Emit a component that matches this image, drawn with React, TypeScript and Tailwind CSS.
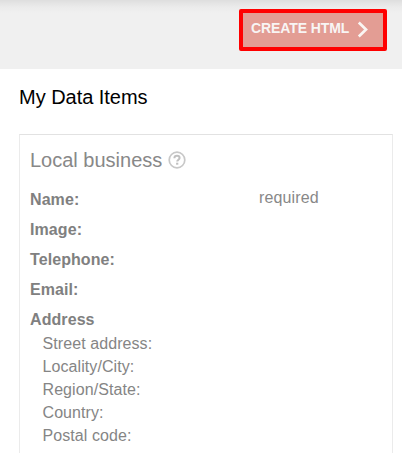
const fields = ["Name:", "Image:", "Telephone:", "Email:", "Address"];
const addressFields = ["Street address:", "Locality/City:", "Region/State:", "Country:", "Postal code:"];

function HelpIcon() {
  return (
    <svg className="mt-[15.5px] ml-[5.5px] h-[18px] w-[18px]" viewBox="0 0 18 18" fill="none">
      <circle cx="9" cy="9" r="7.8" stroke="#c8c8c8" strokeWidth="1.7" />
      <path d="M6.4 7.2C6.4 5.6 7.5 4.8 9 4.8s2.6.8 2.6 2.2c0 1.6-2.4 1.8-2.4 3.6" stroke="#c0c0c0" strokeWidth="2" />
      <path d="M9.2 11.7v2" stroke="#c0c0c0" strokeWidth="2.2" />
    </svg>
  );
}

export default function App() {
  return (
    <div className="flex h-[453px] w-[402px] flex-col overflow-hidden bg-white font-['Liberation_Sans',Arial,sans-serif]">
      <header className="flex h-[69px] shrink-0 justify-end bg-[#f0f0f0] bg-[linear-gradient(#dedede_0px,#e2e2e2_2px,#ebebeb_7px,#f0f0f0_13px)] pt-[9px] pr-[15px]">
        <button className="flex h-[42px] w-[148px] rounded-[2px] border-4 border-[#ff0000] bg-[#e39d94] pl-[8px] text-[14px] leading-4 font-bold text-[#f8f5f4]">
          <span className="mt-[7px] tracking-[-0.1px] whitespace-nowrap">CREATE HTML</span>
          <svg className="mt-[7.5px] ml-[8px] h-[17px] w-[12px] shrink-0" viewBox="0 0 12 17" fill="none">
            <path d="M1.8 1.5L9 8.5l-7.2 7" stroke="#faf6f3" strokeWidth="2.7" />
          </svg>
        </button>
      </header>
      <h1 className="mt-[16px] ml-[19px] shrink-0 text-[20px] leading-6 tracking-[-0.03px] text-black">My Data Items</h1>
      <section className="mt-[25px] mr-[9px] ml-[19px] h-[330px] shrink-0 border border-[#ebebeb] border-t-[#e2e2e2] pl-[10px] text-[16px] text-[#808080]">
        <div className="flex h-[50px]">
          <h2 className="mt-[13px] text-[20px] leading-6 text-[#888]">Local business</h2>
          <HelpIcon />
        </div>
        {fields.map((field) => (
          <div key={field} className="flex h-[30px] leading-[30px]">
            <span className="w-[229px] font-bold tracking-[0.08px]">{field}</span>
            {field === "Name:" && <span className="-mt-[2px] tracking-[0.12px] text-[#888]">required</span>}
          </div>
        ))}
        <ul className="-mt-[3px] ml-[12.5px] leading-[23px] tracking-[0.08px] text-[#858585]">
          {addressFields.map((field) => (
            <li key={field}>{field}</li>
          ))}
        </ul>
      </section>
    </div>
  );
}
